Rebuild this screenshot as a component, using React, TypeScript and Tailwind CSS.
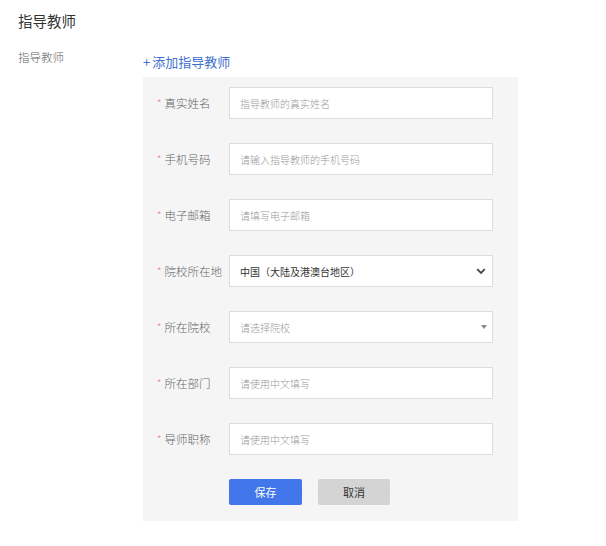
import React from 'react';

const font = { fontFamily: '"Noto Sans CJK SC", "Liberation Sans", sans-serif' };

type Field = { label: string; kind: 'input' | 'select' | 'dropdown'; placeholder?: string; value?: string };

const fields: Field[] = [
  { label: '真实姓名', kind: 'input', placeholder: '指导教师的真实姓名' },
  { label: '手机号码', kind: 'input', placeholder: '请输入指导教师的手机号码' },
  { label: '电子邮箱', kind: 'input', placeholder: '请填写电子邮箱' },
  { label: '院校所在地', kind: 'select', value: '中国（大陆及港澳台地区）' },
  { label: '所在院校', kind: 'dropdown', placeholder: '请选择院校' },
  { label: '所在部门', kind: 'input', placeholder: '请使用中文填写' },
  { label: '导师职称', kind: 'input', placeholder: '请使用中文填写' },
];

const FieldRow: React.FC<{ field: Field }> = ({ field }) => {
  return (
    <div className="flex h-[32px] items-center">
      <div className="flex w-[72px] items-center text-[11.5px] font-light leading-[16px] text-[#666]">
        <span className="mr-[3px] text-[10px] text-[#ec7a7a]">*</span>
        <span>{field.label}</span>
      </div>
      {field.kind === 'input' && (
        <input
          className="h-[32px] w-[264px] border border-[#dcdcdc] bg-white pl-[10px] text-[10px] font-light text-[#333] outline-none placeholder:text-[#999]"
          placeholder={field.placeholder}
        />
      )}
      {field.kind === 'select' && (
        <div className="flex h-[32px] w-[264px] items-center justify-between border border-[#dcdcdc] bg-white pl-[10px] pr-[6px] text-[10px] text-[#333]">
          <span>{field.value}</span>
          <svg width="10" height="7" viewBox="0 0 10 7">
            <polyline points="1.2,1.2 5,5 8.8,1.2" fill="none" stroke="#444" strokeWidth="1.8" />
          </svg>
        </div>
      )}
      {field.kind === 'dropdown' && (
        <div className="flex h-[32px] w-[264px] items-center justify-between border border-[#dcdcdc] bg-white pl-[10px] pr-[5px] text-[10px] font-light text-[#999]">
          <span>{field.placeholder}</span>
          <svg width="6" height="4" viewBox="0 0 6 4">
            <polygon points="0,0 6,0 3,4" fill="#888" />
          </svg>
        </div>
      )}
    </div>
  );
};

export default function App() {
  return (
    <div className="min-h-[546px] bg-white px-[18px] pt-[11px]" style={font}>
      <div className="text-[14.5px] leading-[20px] text-[#333]">指导教师</div>
      <div className="mt-[18px] flex">
        <div className="w-[125px] text-[11.5px] font-light leading-[16px] text-[#666]">指导教师</div>
        <div className="flex flex-col">
          <div className="mt-[4px] flex items-center text-[13px] leading-[18px] text-[#3f6fcf]">
            <span className="mr-[2px]">+</span>
            <span>添加指导教师</span>
          </div>
          <div className="mt-[6px] flex w-[375px] flex-col gap-[24px] bg-[#f5f5f5] pb-[16px] pl-[14px] pr-[24px] pt-[10px]">
            {fields.map((f) => (
              <FieldRow key={f.label} field={f} />
            ))}
            <div className="flex gap-[16px] pl-[72px]">
              <button className="h-[26px] w-[73px] rounded-[2px] bg-[#4177eb] text-[11px] text-white">保存</button>
              <button className="h-[26px] w-[72px] rounded-[2px] bg-[#d4d4d4] text-[11px] text-[#333]">取消</button>
            </div>
          </div>
        </div>
      </div>
    </div>
  );
}
